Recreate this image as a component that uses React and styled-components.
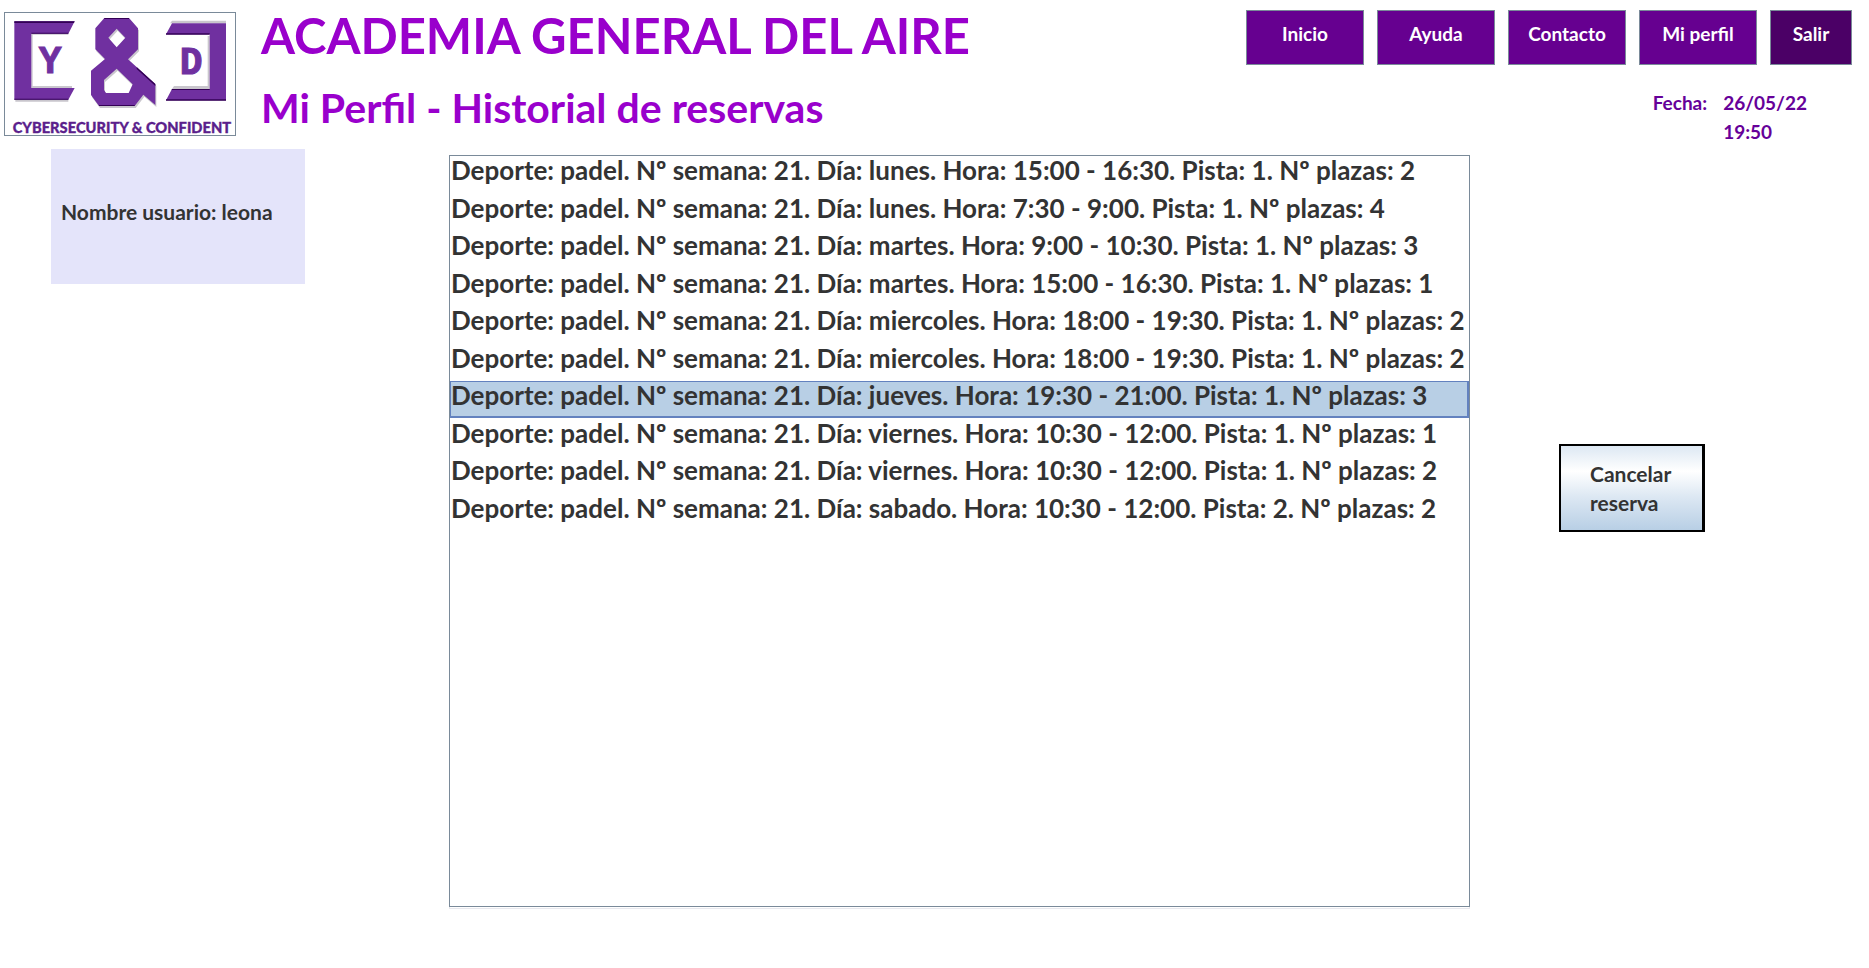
import React, { useState } from "react";
import styled, { createGlobalStyle } from "styled-components";

const GlobalStyle = createGlobalStyle`
  * { box-sizing: border-box; }
  body {
    margin: 0;
    background: #ffffff;
    color: #333333;
    font-family: Lato, "Noto Sans", sans-serif;
    font-weight: 700;
  }
`;

const Page = styled.div`
  min-height: 100vh;
  display: flex;
  flex-direction: column;
`;

const Header = styled.header`
  display: flex;
  align-items: flex-start;
  padding: 10px 17px 0 4px;
`;

const LogoFrame = styled.div`
  flex: none;
  margin-top: 2px;
  border: 1px solid #7a8a99;
  line-height: 0;
`;

const Titles = styled.div`
  flex: 1;
  padding-left: 25px;
  color: #9900cc;
`;

const Title = styled.h1`
  margin: 0;
  font-size: 49px;
  line-height: 50px;
`;

const Subtitle = styled.h2`
  margin: 24px 0 0;
  font-size: 41px;
  line-height: 48px;
`;

const HeaderSide = styled.div`
  flex: none;
`;

const Nav = styled.nav`
  display: flex;
  gap: 13px;
`;

const NavButton = styled.button`
  width: ${(p) => (p.$exit ? 82 : 118)}px;
  height: 55px;
  padding: 0 0 8px;
  border: 1px solid #7a8a99;
  background: ${(p) => (p.$exit ? "#4b0066" : "#660090")};
  color: #ffffff;
  font: inherit;
  font-size: 19px;
  cursor: pointer;
`;

const Clock = styled.dl`
  display: flex;
  justify-content: flex-end;
  gap: 16px;
  margin: 23px 45px 0 0;
  color: #660099;
  font-size: 19px;
  line-height: 29px;
`;

const ClockLabel = styled.dt``;

const ClockValue = styled.dd`
  margin: 0;
`;

const Time = styled.time`
  display: block;
`;

const Main = styled.main`
  flex: 1;
  display: grid;
  grid-template-columns: 449px minmax(0, 1fr) 399px;
  padding: 3px 0 61px;
`;

const UserCard = styled.section`
  width: 254px;
  height: 135px;
  margin-left: 51px;
  padding: 0 10px 10px;
  display: flex;
  align-items: center;
  background: #e4e4fa;
  font-size: 21px;
`;

const History = styled.ul`
  margin: 6px 0 0;
  padding: 0;
  list-style: none;
  border: 1px solid #7a8a99;
  box-shadow: 0 2px 0 -1px #ffffff, 0 2px 0 #e8e8ee;
  display: grid;
  grid-auto-rows: 37px 38px;
  align-content: start;
`;

const Booking = styled.li`
  display: flex;
  align-items: center;
  padding: 0 0 8px;
  border: solid ${(p) => (p.$selected ? "#6382bf" : "transparent")};
  border-width: 1px 2px 2px 1px;
  background: ${(p) => (p.$selected ? "#b8cfe5" : "transparent")};
  font-size: 26px;
  line-height: 26px;
  white-space: nowrap;
  cursor: default;
`;

const Actions = styled.aside`
  padding: 295px 0 0 89px;
`;

const CancelButton = styled.button`
  width: 146px;
  height: 88px;
  padding: 0 0 0 29px;
  border: solid #000000;
  border-width: 2px 3px 2px 2px;
  background: linear-gradient(#dde8f3, #ffffff 30%, #dde8f3 60%, #b8cfe5);
  color: #333333;
  font: inherit;
  font-size: 21px;
  line-height: 29px;
  text-align: left;
  cursor: pointer;
`;

const LogoInitial = styled.text`
  font-family: "Liberation Mono", monospace;
  font-weight: 700;
  font-size: 114px;
  fill: #7030a0;
  stroke: #7030a0;
  stroke-width: 3px;
`;

const LogoName = styled.text`
  font-family: Lato, sans-serif;
  font-weight: 900;
  font-size: 44px;
  fill: #5b1f8c;
  stroke: #5b1f8c;
  stroke-width: 1px;
`;

const AMPERSAND =
  "M313 54H387L414 85V148L384 178L466 252V315L430 284L404 318H297L273 285V212L315 177L286 148V85Z " +
  "M350 86L325 113L350 142L376 113Z M350 206L312 240V270L318 279H386L398 253Z";

function Logo() {
  return (
    <svg width="230" height="122" viewBox="15 39 690 366" role="img" aria-label="Cybersecurity &amp; Confident">
      <g fill="#c9c6cd">
        <path d="M46 299H205V305H46Z M516 62H678V70H510Z M94 101H205V104H98V258H216V264H94Z M623 108H629V267H516L522 258H623Z" />
        <path d={AMPERSAND} fillRule="evenodd" transform="translate(3 6)" />
      </g>
      <g fill="#7030a0">
        <path d="M43 64H224L205 101H94V264H224L205 299H43Z" />
        <path d="M516 70H678V301H498L516 267H629V103H498Z" />
        <path d={AMPERSAND} fillRule="evenodd" />
      </g>
      <g fill="#330055">
        <path d="M43 64H224L222 69H43Z M498 100H629V104H498Z M498 298H678V302H498Z M516 267H629V270H515Z M94 98H205V101H94Z M43 296H205V299H43Z" />
        <path d="M410 201L466 252V258L410 207Z M313 54H387V57H313Z M297 315H404V318H297Z" />
      </g>
      <LogoInitial x="116" y="219">Y</LogoInitial>
      <LogoInitial x="539" y="223">D</LogoInitial>
      <LogoName x="38" y="399">CYBERSECURITY &amp; CONFIDENT</LogoName>
    </svg>
  );
}

const NAV = ["Inicio", "Ayuda", "Contacto", "Mi perfil", "Salir"];

const BOOKINGS = [
  { day: "lunes", hours: "15:00 - 16:30", court: 1, places: 2 },
  { day: "lunes", hours: "7:30 - 9:00", court: 1, places: 4 },
  { day: "martes", hours: "9:00 - 10:30", court: 1, places: 3 },
  { day: "martes", hours: "15:00 - 16:30", court: 1, places: 1 },
  { day: "miercoles", hours: "18:00 - 19:30", court: 1, places: 2 },
  { day: "miercoles", hours: "18:00 - 19:30", court: 1, places: 2 },
  { day: "jueves", hours: "19:30 - 21:00", court: 1, places: 3 },
  { day: "viernes", hours: "10:30 - 12:00", court: 1, places: 1 },
  { day: "viernes", hours: "10:30 - 12:00", court: 1, places: 2 },
  { day: "sabado", hours: "10:30 - 12:00", court: 2, places: 2 },
];

export default function App() {
  const [selected, setSelected] = useState(6);
  return (
    <Page>
      <GlobalStyle />
      <Header>
        <LogoFrame>
          <Logo />
        </LogoFrame>
        <Titles>
          <Title>ACADEMIA GENERAL DEL AIRE</Title>
          <Subtitle>Mi Perfil - Historial de reservas</Subtitle>
        </Titles>
        <HeaderSide>
          <Nav>
            {NAV.map((name) => (
              <NavButton key={name} type="button" $exit={name === "Salir"}>
                {name}
              </NavButton>
            ))}
          </Nav>
          <Clock>
            <ClockLabel>Fecha:</ClockLabel>
            <ClockValue>
              <Time>26/05/22</Time>
              <Time>19:50</Time>
            </ClockValue>
          </Clock>
        </HeaderSide>
      </Header>
      <Main>
        <UserCard>Nombre usuario: leona</UserCard>
        <History role="listbox" aria-label="Historial de reservas">
          {BOOKINGS.map((b, i) => (
            <Booking
              key={i}
              role="option"
              aria-selected={i === selected}
              $selected={i === selected}
              onClick={() => setSelected(i)}
            >
              {`Deporte: padel. Nº semana: 21. Día: ${b.day}. Hora: ${b.hours}. Pista: ${b.court}. Nº plazas: ${b.places}`}
            </Booking>
          ))}
        </History>
        <Actions>
          <CancelButton type="button">
            Cancelar
            <br />
            reserva
          </CancelButton>
        </Actions>
      </Main>
    </Page>
  );
}
